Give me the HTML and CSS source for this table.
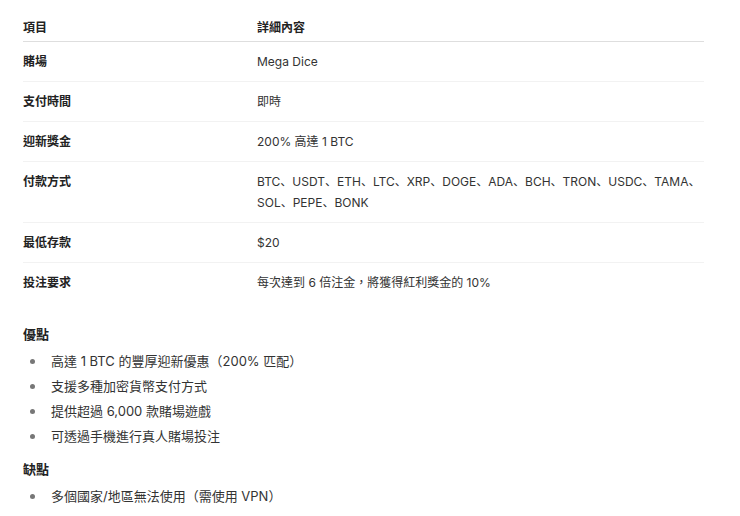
FILE: index.html
```html
<!DOCTYPE html>
<html lang="zh-Hant">
<head>
    <meta charset="UTF-8">
    <title>Mega Dice 評測</title>
    <link rel="stylesheet" href="styles.css">
</head>
<body>
    <div class="review">
        <table class="info-table">
            <thead>
                <tr>
                    <th>項目</th>
                    <th>詳細內容</th>
                </tr>
            </thead>
            <tbody>
                <tr>
                    <td class="label">賭場</td>
                    <td>Mega Dice</td>
                </tr>
                <tr>
                    <td class="label">支付時間</td>
                    <td>即時</td>
                </tr>
                <tr>
                    <td class="label">迎新獎金</td>
                    <td>200% 高達 1 BTC</td>
                </tr>
                <tr>
                    <td class="label">付款方式</td>
                    <td>BTC、USDT、ETH、LTC、XRP、DOGE、ADA、BCH、TRON、USDC、TAMA、SOL、PEPE、BONK</td>
                </tr>
                <tr>
                    <td class="label">最低存款</td>
                    <td>$20</td>
                </tr>
                <tr>
                    <td class="label">投注要求</td>
                    <td>每次達到 6 倍注金，將獲得紅利獎金的 10%</td>
                </tr>
            </tbody>
        </table>

        <h4 class="list-title">優點</h4>
        <ul class="points">
            <li>高達 1 BTC 的豐厚迎新優惠（200% 匹配）</li>
            <li>支援多種加密貨幣支付方式</li>
            <li>提供超過 6,000 款賭場遊戲</li>
            <li>可透過手機進行真人賭場投注</li>
        </ul>

        <h4 class="list-title cons">缺點</h4>
        <ul class="points">
            <li>多個國家/地區無法使用（需使用 VPN）</li>
        </ul>
    </div>
</body>
</html>
```

FILE: styles.css
```css
body {
    margin: 0;
    background: #fff;
    color: #222;
    font-family: Inter, "Noto Sans CJK SC", sans-serif;
}
.review {
    padding: 13px 36px 0 23px;
}
.info-table {
    width: 100%;
    border-collapse: collapse;
    font-size: 12px;
    line-height: 21px;
}
.info-table th {
    text-align: left;
    font-weight: 600;
    padding: 4px 0 3px;
    border-bottom: 1px solid #dedede;
}
.info-table td {
    padding: 9px 0 9px 0;
    border-bottom: 1px solid #f2f2f2;
    color: #333;
    vertical-align: top;
}
.info-table tbody tr:last-child td {
    border-bottom: none;
}
.info-table th:first-child,
.info-table td:first-child {
    width: 234px;
}
.info-table td.label {
    font-weight: 600;
    color: #222;
}
.list-title {
    margin: 22px 0 5px;
    font-size: 13px;
    line-height: 20px;
    font-weight: 600;
}
.list-title.cons {
    margin-top: 10px;
}
.points {
    margin: 0;
    padding: 0;
    list-style: none;
    font-size: 13px;
    line-height: 25px;
    color: #333;
}
.points li {
    display: flex;
    align-items: center;
}
.points li::before {
    content: "";
    width: 5px;
    height: 5px;
    border-radius: 50%;
    background: #777;
    margin: 0 16px 0 7px;
    flex-shrink: 0;
}
```
